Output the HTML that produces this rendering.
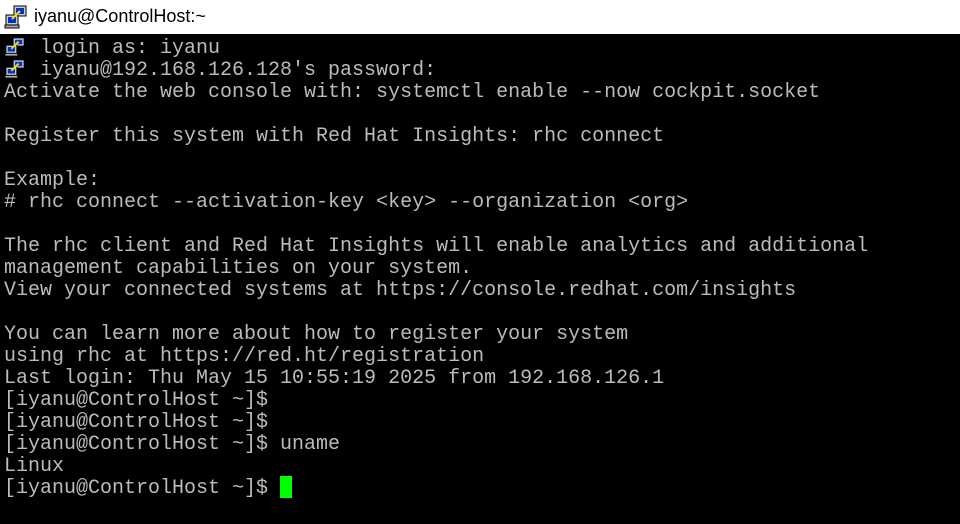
<!DOCTYPE html>
<html><head><style>
html,body{margin:0;padding:0;width:960px;height:524px;overflow:hidden;background:#000}
#title{position:absolute;left:0;top:0;width:960px;height:34px;background:#fff;}
#title span{position:absolute;left:34px;top:6px;font:18px "Liberation Sans",sans-serif;color:#000}
#term{position:absolute;left:4px;top:38px;margin:0;font:20px/22px "Liberation Mono",monospace;color:#bbb;white-space:pre}
.ic{position:absolute}
#cur{position:absolute;left:280px;top:476px;width:12px;height:22px;background:#0f0}
</style></head><body>
<div id="title">
<svg class="ic" style="left:4px;top:5px" width="24" height="24" viewBox="0 0 24 24">
<rect x="10" y="1" width="12" height="10" fill="#ccc" stroke="#000"/><rect x="12" y="3" width="8" height="6" fill="#03c"/>
<rect x="2" y="10" width="12" height="10" fill="#ccc" stroke="#000"/><rect x="4" y="12" width="8" height="6" fill="#03c"/>
<rect x="1" y="20" width="14" height="3" fill="#aaa" stroke="#000"/>
<path d="M8 14 L16 6" stroke="#fd0" stroke-width="2"/>
</svg>
<span>iyanu@ControlHost:~</span></div>
<svg class="ic" style="left:4px;top:37px" width="22" height="20" viewBox="0 0 24 22"><rect x="10" y="1" width="12" height="9" fill="#ccc" stroke="#000"/><rect x="12" y="3" width="8" height="5" fill="#03c"/><rect x="2" y="9" width="12" height="9" fill="#ccc" stroke="#000"/><rect x="4" y="11" width="8" height="5" fill="#03c"/><rect x="1" y="18" width="14" height="3" fill="#aaa" stroke="#000"/><path d="M8 13 L16 5" stroke="#fd0" stroke-width="2"/></svg>
<svg class="ic" style="left:4px;top:59px" width="22" height="20" viewBox="0 0 24 22"><rect x="10" y="1" width="12" height="9" fill="#ccc" stroke="#000"/><rect x="12" y="3" width="8" height="5" fill="#03c"/><rect x="2" y="9" width="12" height="9" fill="#ccc" stroke="#000"/><rect x="4" y="11" width="8" height="5" fill="#03c"/><rect x="1" y="18" width="14" height="3" fill="#aaa" stroke="#000"/><path d="M8 13 L16 5" stroke="#fd0" stroke-width="2"/></svg>
<pre id="term">   login as: iyanu
   iyanu@192.168.126.128's password:
Activate the web console with: systemctl enable --now cockpit.socket

Register this system with Red Hat Insights: rhc connect

Example:
# rhc connect --activation-key &lt;key&gt; --organization &lt;org&gt;

The rhc client and Red Hat Insights will enable analytics and additional
management capabilities on your system.
View your connected systems at https://console.redhat.com/insights

You can learn more about how to register your system
using rhc at https://red.ht/registration
Last login: Thu May 15 10:55:19 2025 from 192.168.126.1
[iyanu@ControlHost ~]$
[iyanu@ControlHost ~]$
[iyanu@ControlHost ~]$ uname
Linux
[iyanu@ControlHost ~]$ </pre>
<div id="cur"></div>
</body></html>
